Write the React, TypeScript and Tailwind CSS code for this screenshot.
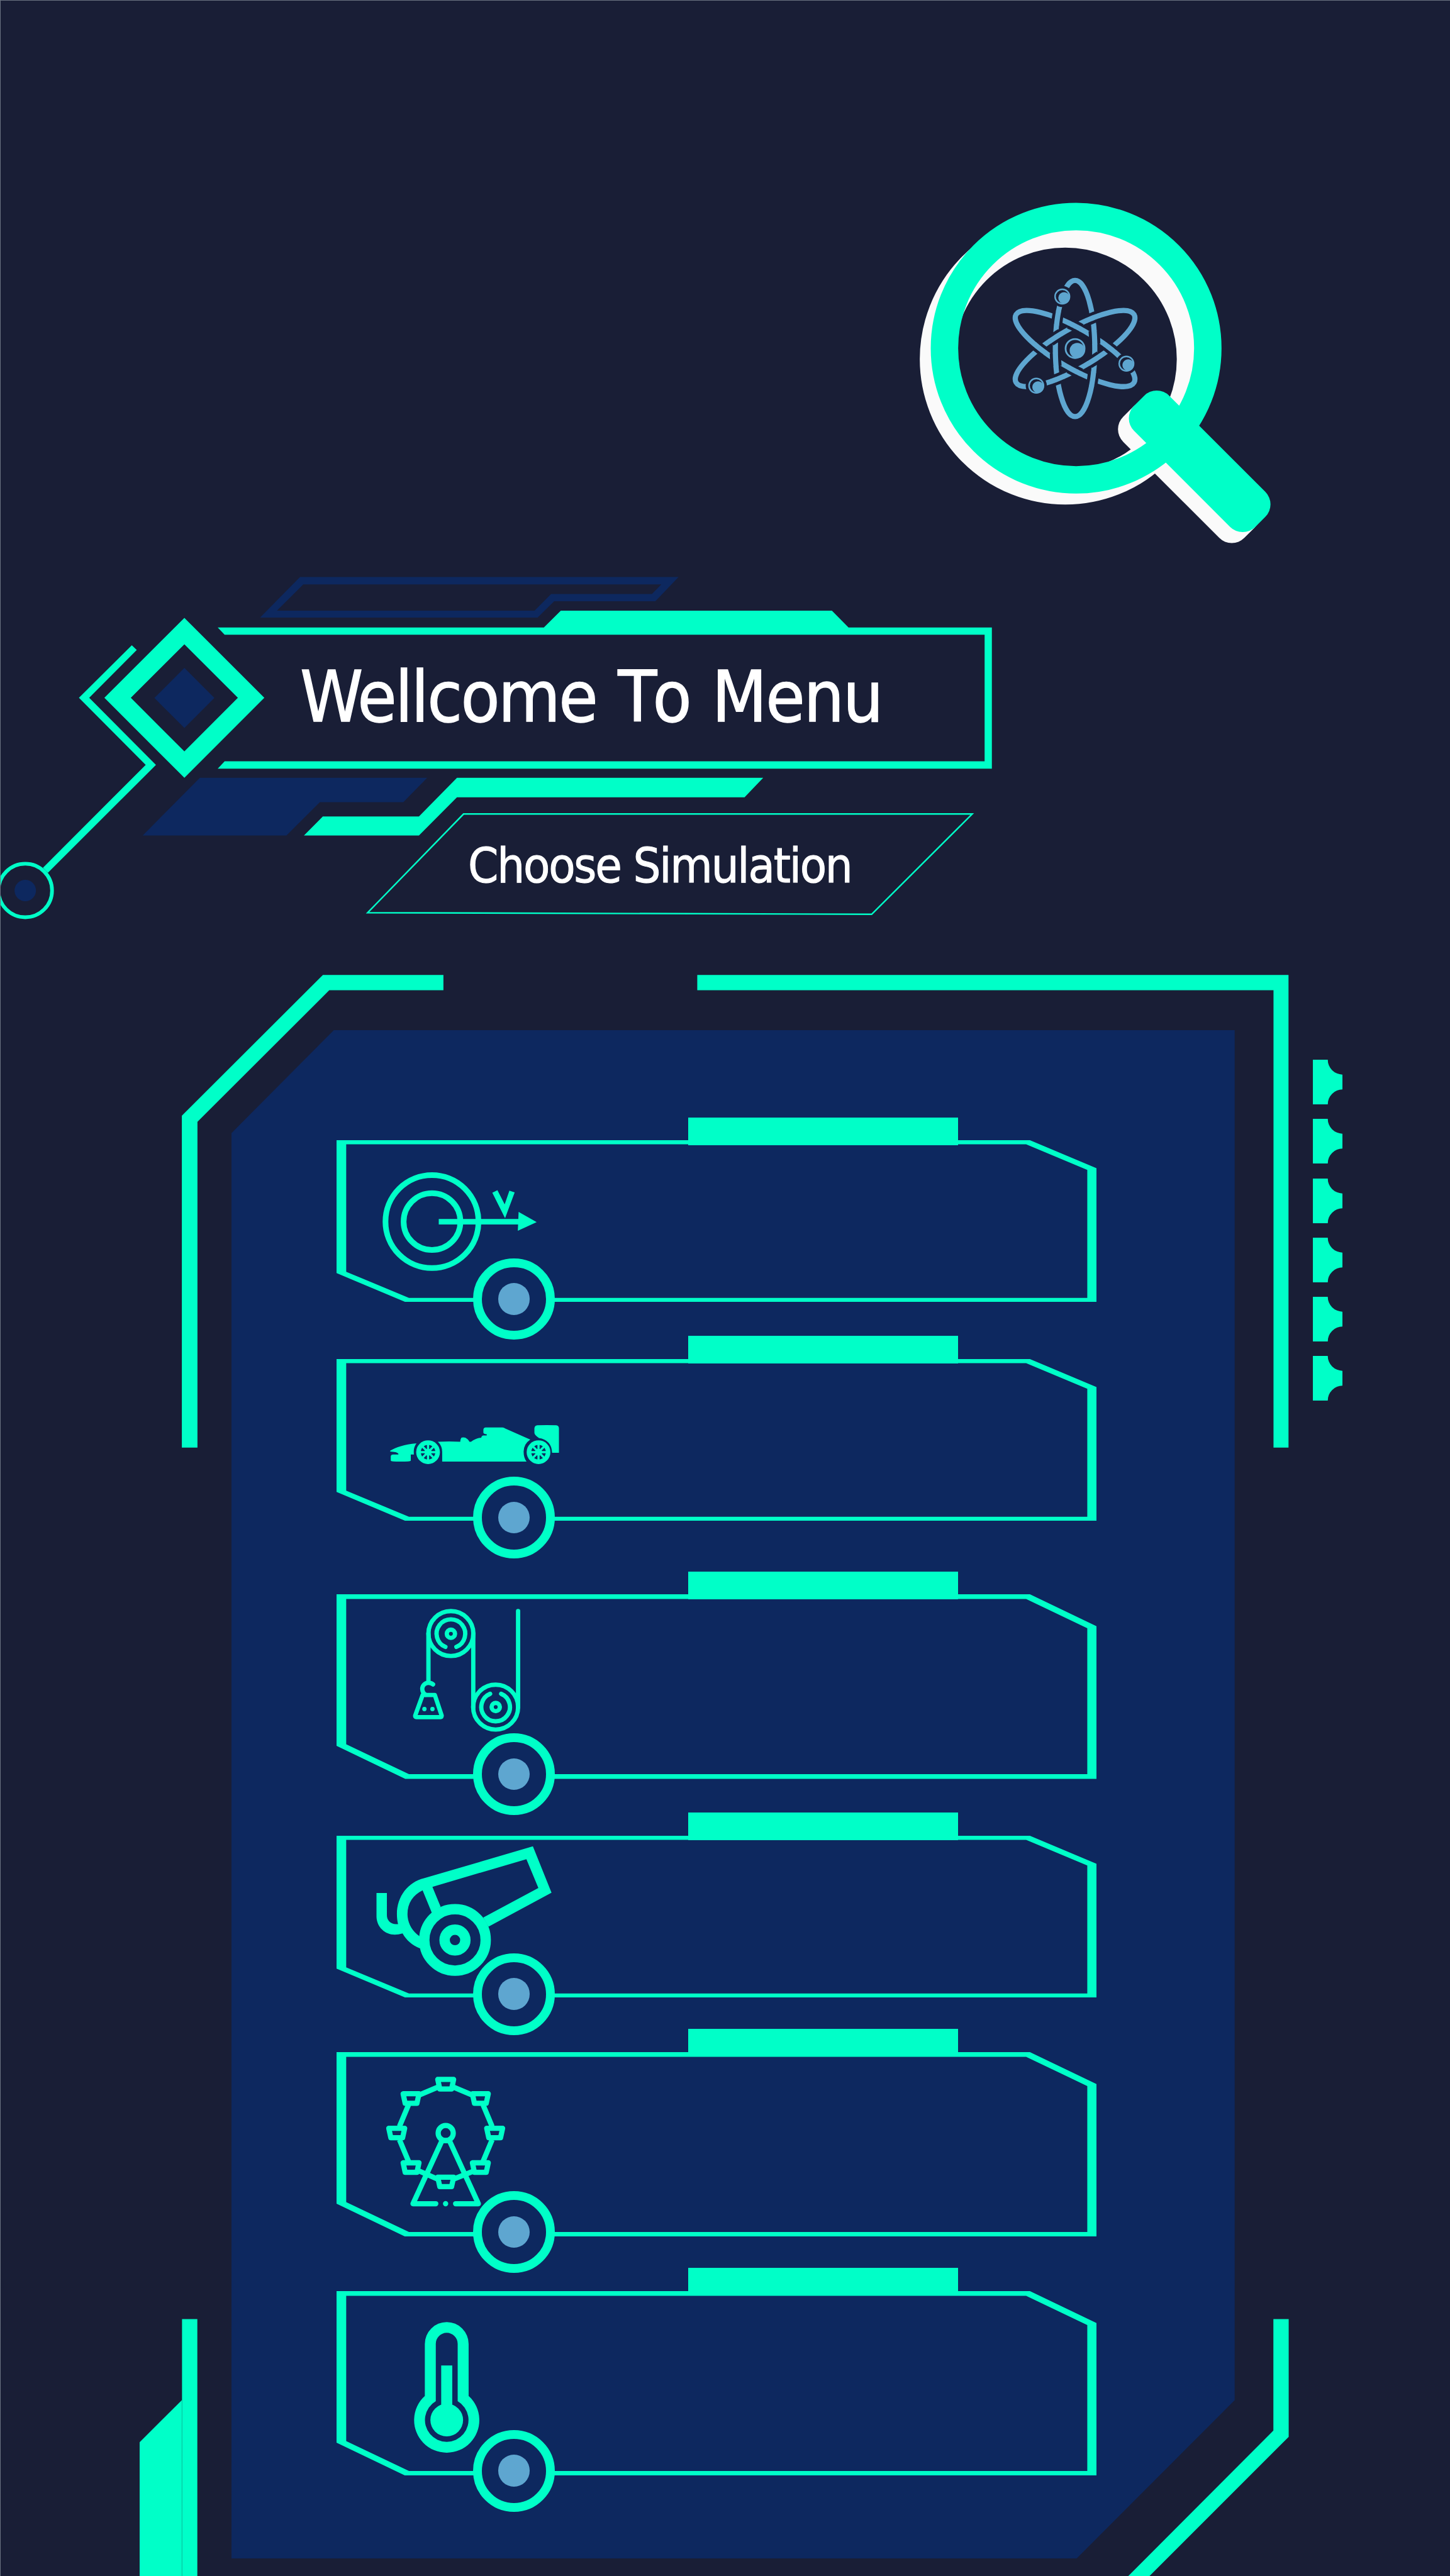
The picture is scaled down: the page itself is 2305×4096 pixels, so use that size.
import type { ReactNode } from 'react';

const GREEN = '#00ffc8';
const NAVY = '#0d285f';
const SKY = '#5ea6d0';
const NIGHT = '#191e36';

type Orbit = 'v' | 'a' | 'b';

const RX = 33.5;
const RY = 115.7;
const orbitTilt: Record<Orbit, number> = { v: 0, a: 60, b: -60 };

/** A short piece of an orbit around the direction `clock` (degrees clockwise from up). */
function orbitArc(orbit: Orbit, clock: number, half: number) {
  const tilt = (orbitTilt[orbit] * Math.PI) / 180;
  const dir = (clock * Math.PI) / 180 - tilt;
  const mid = Math.atan2(Math.sin(dir) / RX, Math.cos(dir) / RY);
  const speed = Math.hypot(RX * Math.cos(mid), RY * Math.sin(mid));
  const points: string[] = [];
  for (let i = -6; i <= 6; i++) {
    const t = mid + ((i / 6) * half) / speed;
    const x = RX * Math.sin(t);
    const y = -RY * Math.cos(t);
    const px = x * Math.cos(tilt) - y * Math.sin(tilt);
    const py = x * Math.sin(tilt) + y * Math.cos(tilt);
    points.push(`${px.toFixed(2)},${py.toFixed(2)}`);
  }
  return points.join(' ');
}

const overpasses: { orbit: Orbit; clock: number }[] = [
  { orbit: 'a', clock: 30 },
  { orbit: 'b', clock: 90 },
  { orbit: 'v', clock: 150 },
  { orbit: 'a', clock: 210 },
  { orbit: 'b', clock: 270 },
  { orbit: 'v', clock: 330 },
  { orbit: 'b', clock: 0 },
  { orbit: 'v', clock: 60 },
  { orbit: 'a', clock: 120 },
  { orbit: 'b', clock: 180 },
  { orbit: 'v', clock: 240 },
  { orbit: 'a', clock: 300 },
];

const electrons = [
  { x: -21.7, y: -88.4 },
  { x: -65.9, y: 63.1 },
  { x: 87.2, y: 25.7 },
];

function Atom() {
  return (
    <g transform="translate(1825.7 592)" fill="none" stroke={SKY} strokeWidth="8.8">
      <ellipse rx={RX} ry={RY} />
      <ellipse rx={RX} ry={RY} transform="rotate(60)" />
      <ellipse rx={RX} ry={RY} transform="rotate(-60)" />
      {overpasses.map((o) => (
        <g key={o.clock}>
          <polyline points={orbitArc(o.orbit, o.clock, 11)} stroke={NIGHT} strokeWidth="19" />
          <polyline points={orbitArc(o.orbit, o.clock, 12)} />
        </g>
      ))}
      {electrons.map((e) => (
        <g key={e.x} transform={`translate(${e.x} ${e.y})`} stroke="none">
          <circle r="18" fill={NIGHT} />
          <circle r="12.3" fill="none" stroke={SKY} strokeWidth="2.6" />
          <circle cx="3" cy="2.4" r="9.8" fill={SKY} />
        </g>
      ))}
      <circle r="16.1" strokeWidth="3" />
      <circle cx="3.8" cy="3.4" r="13" fill={SKY} stroke="none" />
    </g>
  );
}

function Emblem() {
  return (
    <svg viewBox="1550 330 620 610" className="h-[570.8px] w-[580.2px]">
      <g transform="translate(-18.5 18.6)">
        <circle cx="1827.5" cy="591.5" r="218.3" fill="none" stroke="#fafafa" strokeWidth="57.6" />
        <rect x="1891.9" y="741.5" width="291" height="84.4" rx="30" fill="#fafafa" transform="rotate(45 2037.4 783.7)" />
      </g>
      <circle cx="1827.5" cy="591.5" r="223.7" fill="none" stroke={GREEN} strokeWidth="46.6" />
      <rect x="1891.9" y="741.5" width="291" height="84.4" rx="30" fill={GREEN} transform="rotate(45 2037.4 783.7)" />
      <Atom />
    </svg>
  );
}

function TitleOrnament() {
  return (
    <svg viewBox="0 960 2463 640" preserveAspectRatio="none" className="absolute left-0 top-0 h-[598.9px] w-[2305px]">
      <path
        fill={NAVY}
        fillRule="evenodd"
        d="M509.6 980.8L441.7 1049.8H913.2L941.4 1022H1113.3L1152.6 980.8ZM515.2 993.5H1123.3L1107.4 1009.8H936.1L908 1038H470.3Z"
      />
      <path
        fill={GREEN}
        d="M369.8 1066.5H923.8L952.6 1038H1413.1L1441.3 1066.5H1684.8V1306.5H369.8L381.6 1293.9H1672.5V1078.8H381.6Z"
      />
      <path
        fill={GREEN}
        fillRule="evenodd"
        d="M313.2 1050.2L449 1186.1L313.2 1322L177.3 1186.1ZM313.2 1095.1L404.1 1186.1L313.2 1277.1L222.2 1186.1Z"
      />
      <path fill={NAVY} d="M313.2 1135.3L364.2 1186.3L313.2 1237.3L262.2 1186.3Z" />
      <path
        fill={GREEN}
        d="M223.9 1096.7L232.3 1104.9L151.5 1186.1L264.9 1300L81.4 1483.3L73 1474.7L247.5 1300L134.1 1186.1Z"
      />
      <circle cx="42.9" cy="1513.5" r="45.5" fill="none" stroke={GREEN} strokeWidth="6.2" />
      <circle cx="42.9" cy="1513.5" r="18.2" fill={NAVY} />
      <path fill={NAVY} d="M339.5 1322H725.7L685.2 1363.3H543.3L486.6 1420H242.4Z" />
      <path fill={GREEN} d="M776.2 1322H1296.4L1264.7 1355.1H776.2L711.6 1420H516.3L548.3 1387.8H711.6Z" />
      <path fill="none" stroke={GREEN} strokeWidth="2.6" d="M787.4 1383.5H1651.4L1480.6 1553.9L624.5 1551.2Z" />
    </svg>
  );
}

function PanelBrackets() {
  return (
    <svg viewBox="0 1640 2463 2737" preserveAspectRatio="none" className="absolute bottom-0 left-0 h-[2561.3px] w-[2305px]">
      <g fill={GREEN}>
        <path d="M753.2 1656.2H548.5L308.9 1895.5V2459.4H335.4V1905.8L559.3 1682.2H753.2Z" />
        <path d="M1184.4 1656.2H2188.7V2459.4H2163.2V1682.2H1184.4Z" />
        <path d="M2163 3940.2H2189V4140.3L1952.3 4377H1916.3L2163 4129.7Z" />
        <path d="M309.2 3940.2H335.2V4377H309.2Z" />
        <path d="M308.8 4078V4377H237.2V4149.3Z" />
      </g>
      <path d="M309.1 4078V4377" stroke="#0bcfaa" strokeWidth="1" />
    </svg>
  );
}

function Tooth() {
  return (
    <svg viewBox="0 0 50.6 75.8" className="h-[70.9px] w-[47.4px]">
      <path fill={GREEN} d="M0 0H25.3A25.3 25.3 0 0 0 50.6 25.3V50.5A25.3 25.3 0 0 0 25.3 75.8H0Z" />
    </svg>
  );
}

function VelocityIcon() {
  return (
    <svg viewBox="325 325 795 520" className="ml-[72.1px] mt-[47.5px] h-[162.2px] w-[248px]">
      <g fill="none" stroke={GREEN} strokeWidth="29">
        <circle cx="580.5" cy="586" r="237" />
        <circle cx="580.5" cy="586" r="144.7" />
        <path d="M615 586.5H1024" strokeWidth="28" />
      </g>
      <path fill={GREEN} d="M1022 537L1114 589L1018 633Z" />
      <path fill={GREEN} d="M888 439L914 426L951 498L975 428L1002 437L953 569Z" />
    </svg>
  );
}

function CarWheel({ x }: { x: number }) {
  return (
    <g transform={`translate(${x} 561)`}>
      <circle r="60.5" fill={GREEN} />
      <circle r="37" fill={NAVY} />
      <path stroke={GREEN} strokeWidth="11" d="M0 -40V40M-40 0H40M-28 -28L28 28M28 -28L-28 28" />
      <circle r="18" fill={GREEN} />
    </g>
  );
}

function RaceCarIcon() {
  return (
    <svg viewBox="365 420 870 205" className="ml-[84.6px] mt-[103.9px] h-[64px] w-[271.4px]">
      <g fill={GREEN}>
        <path d="M369 554C400 536 440 521 503 516C490 534 488 550 490 573H474V604Q473 609 422 609Q372 609 372 604V582Q373 574 384 573H409Q414 572 410 568Q403 560 369 558Z" />
        <path d="M612 508Q670 505 726 508Q727 494 732 487Q758 481 773 508H781Q805 490 833 487Q834 478 842 476H861V470Q845 468 844 462V446Q845 436 856 435H942Q948 436 956 441L1083 497Q1049 520 1049 558Q1049 590 1064 609H634V560Q634 528 612 508Z" />
        <path d="M1119 424Q1167 422 1215 424Q1229 426 1229 440V564H1194Q1192 500 1127 489Q1104 472 1104 462V439Q1106 425 1119 424Z" />
      </g>
      <CarWheel x={562} />
      <CarWheel x={1125} />
    </svg>
  );
}

function PulleyIcon() {
  return (
    <svg viewBox="480 155 560 640" className="ml-[120.4px] mt-[21.2px] h-[199.6px] w-[174.7px]">
      <g fill="none" stroke={GREEN} strokeWidth="22" strokeLinecap="round" strokeLinejoin="round">
        <circle cx="678" cy="288" r="114.5" />
        <path d="M650 356A73 73 0 1 1 706 356" />
        <circle cx="678" cy="289" r="21" />
        <path d="M563.5 288V535" />
        <path d="M792 288V663" />
        <circle cx="906" cy="663" r="114.5" />
        <path d="M878 595A73 73 0 1 0 934 595" />
        <circle cx="906.5" cy="662.5" r="21" />
        <path d="M1020.5 173V663" />
        <path d="M587 547Q577 539 563 539A31 31 0 0 0 532 570Q533 592 550 600" />
        <path d="M534 601H596L631 706Q631 714 625 714H502Q495 714 496 706Z" />
      </g>
      <circle cx="543" cy="673" r="11" fill={GREEN} />
      <circle cx="584" cy="673" r="11" fill={GREEN} />
    </svg>
  );
}

function CannonIcon() {
  return (
    <svg viewBox="290 135 905 670" className="ml-[61.2px] mt-[15.3px] h-[209px] w-[282.3px]">
      <path
        fill={GREEN}
        d="M540 303L1095 141L1190 377L869 550L842 504L1123 353L1062 206L583 347L625 449L580 480L533 365C485 388 456 430 456 486C456 530 478 572 516 598L540 630L519 661C480 645 450 620 431 585Q410 591 391 591C340 591 298 550 298 497V379H351V492C351 518 370 537 396 537H408C403 515 402 500 402 486C402 395 460 322 540 303Z"
      />
      <g fill="none" stroke={GREEN} strokeWidth="53">
        <circle cx="698" cy="618" r="156.5" />
        <circle cx="698" cy="618.5" r="53" />
      </g>
    </svg>
  );
}

const cups = [
  [652.5, 177],
  [829, 250],
  [902, 426],
  [829, 602],
  [652.5, 675],
  [476, 602],
  [403, 426],
  [476, 250],
];

function FerrisWheelIcon() {
  return (
    <svg viewBox="340 170 625 675" className="ml-[76.7px] mt-[37.4px] h-[210.6px] w-[195px]">
      <g fill="none" stroke={GREEN} strokeWidth="26.5" strokeLinejoin="round">
        {cups.map(([x, y]) => (
          <path key={`${x}-${y}`} transform={`translate(${x} ${y})`} d="M-40.5 13.5H40.5L30 62H-30Z" />
        ))}
        <path d="M690 229L785 269M843 320L889 430M889 498L843 608M797 657L697 697M608 697L508 653M463 608L417 498M417 430L463 320M520 269L615 229" />
        <circle cx="652.5" cy="464" r="38.5" />
        <path d="M642 502H663" />
        <path strokeLinecap="round" d="M631 508L486 824H602M674 508L819 824H703" />
      </g>
      <circle cx="652" cy="824" r="13.5" fill={GREEN} />
    </svg>
  );
}

function ThermometerIcon() {
  return (
    <svg viewBox="-60 -170 120 230" className="ml-[119.2px] mt-[45.8px] h-[215.2px] w-[112.3px]">
      <path
        fill={GREEN}
        fillRule="evenodd"
        d="M-37.2 -41V-129.4A37.2 37.2 0 0 1 37.2 -129.4V-41A55.4 55.4 0 1 1 -37.2 -41ZM-18.6 -32V-129.7A18.6 18.6 0 0 1 18.6 -129.7V-32A37 37 0 1 1 -18.6 -32Z"
      />
      <path fill={GREEN} d="M-9.4 -92.9H9.4V-20H-9.4Z" />
      <circle r="27.8" fill={GREEN} />
    </svg>
  );
}

function MenuCard({ size, children }: { size: string; children: ReactNode }) {
  return (
    <button type="button" className={`relative flex w-[1208.4px] shrink-0 items-start ${size}`}>
      <svg viewBox="0 0 1291.2 274.8" preserveAspectRatio="none" className="absolute inset-0 h-full w-full">
        <path
          fill={GREEN}
          fillRule="evenodd"
          d="M0 0H1177.8L1291.2 47.7V274.8H116.7L0 225.8ZM16.4 7V223.5L123 267.8H1275.2V50.5L1171.3 7Z"
        />
      </svg>
      <span className="absolute left-[559.5px] top-[-36.6px] h-[44px] w-[429px] bg-[#00ffc8]" />
      {children}
      <span className="absolute bottom-[-59.8px] left-[217.6px] flex size-[129.6px] items-center justify-center rounded-full border-[14.8px] border-[#00ffc8] bg-[#0d285f]">
        <span className="size-[50.6px] shrink-0 rounded-full bg-[#5ea6d0]" />
      </span>
    </button>
  );
}

export default function App() {
  return (
    <main className="relative flex h-[4096px] w-[2305px] flex-col overflow-hidden bg-[#191e36] font-['DejaVu_Sans_Condensed','DejaVu_Sans',sans-serif] text-white">
      <header className="flex h-[898.4px] shrink-0 justify-end pr-[274.3px] pt-[308.8px]">
        <Emblem />
      </header>

      <section className="relative flex h-[739.6px] shrink-0 flex-col items-start">
        <TitleOrnament />
        <div className="relative ml-[346px] mt-[99.7px] flex h-[224.6px] w-[1230.6px] items-center pb-[3px] pl-[131px]">
          <h1 className="whitespace-nowrap text-[112.8px] leading-none tracking-[-0.018em] [-webkit-text-stroke:1.3px_white] [word-spacing:4px]">
            <span className="tracking-[-0.023em]">Wellcome</span>{' '}
            <span className="[font-kerning:none]">
              <span className="tracking-[-0.06em]">T</span>o
            </span>{' '}
            Menu
          </h1>
        </div>
        <div className="relative ml-[583.5px] mt-[71.9px] flex h-[162px] w-[962px] items-center pl-[160.6px] pt-[2px]">
          <h2 className="whitespace-nowrap text-[77px] leading-none tracking-[-0.0285em] [-webkit-text-stroke:1px_white]">
            Choose Simulation
          </h2>
        </div>
      </section>

      <PanelBrackets />

      <section className="relative flex items-start pl-[367.7px]">
        <nav className="flex h-[2430px] w-[1595px] shrink-0 flex-col bg-[#0d285f] pl-[167px] pt-[175.2px] [clip-path:polygon(163px_0,100%_0,100%_2178.4px,1344px_100%,0_100%,0_164px)]">
          <MenuCard size="h-[257.2px]">
            <VelocityIcon />
          </MenuCard>
          <MenuCard size="mt-[90.5px] h-[257.2px]">
            <RaceCarIcon />
          </MenuCard>
          <MenuCard size="mt-[117.1px] h-[293.4px] [&>span:last-child]:bottom-[-57.4px]">
            <PulleyIcon />
          </MenuCard>
          <MenuCard size="mt-[90px] h-[257.2px]">
            <CannonIcon />
          </MenuCard>
          <MenuCard size="mt-[87.2px] h-[293.4px] [&>span:last-child]:bottom-[-57.4px]">
            <FerrisWheelIcon />
          </MenuCard>
          <MenuCard size="mt-[86.5px] h-[293.4px] [&>span:last-child]:bottom-[-57.4px]">
            <ThermometerIcon />
          </MenuCard>
        </nav>
        <div className="ml-[124.1px] mt-[47.3px] flex flex-col gap-[23.3px]">
          <Tooth />
          <Tooth />
          <Tooth />
          <Tooth />
          <Tooth />
          <Tooth />
        </div>
      </section>

      <div className="pointer-events-none absolute inset-0 border-l border-t border-[#6b7280]" />
    </main>
  );
}
